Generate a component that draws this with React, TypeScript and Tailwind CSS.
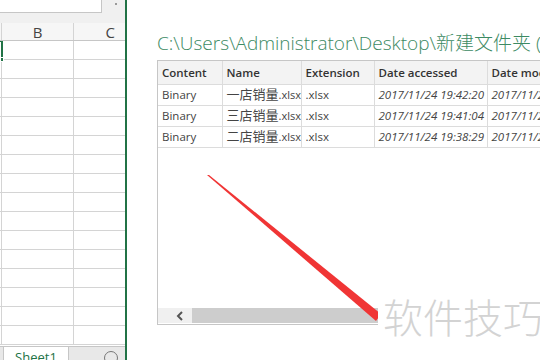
import React from 'react';

const rows = [
  { content: 'Binary', name: '一店销量.xlsx', ext: '.xlsx', accessed: '2017/11/24 19:42:20', modified: '2017/11/24 19:42:20' },
  { content: 'Binary', name: '三店销量.xlsx', ext: '.xlsx', accessed: '2017/11/24 19:41:04', modified: '2017/11/24 19:41:04' },
  { content: 'Binary', name: '二店销量.xlsx', ext: '.xlsx', accessed: '2017/11/24 19:38:29', modified: '2017/11/24 19:38:29' },
];

const font = { fontFamily: '"Open Sans", "Noto Sans CJK SC", sans-serif' };

const Sheet: React.FC = () => {
  const gridRows = Array.from({ length: 16 });
  return (
    <div className="relative flex h-full w-[127px] shrink-0 flex-col border-r-2 border-[#217346] bg-white">
      <div className="flex h-[23px] shrink-0 items-start bg-[#f0f0f0]">
        <div className="h-[13px] w-[102px] border-b border-r border-[#c6c6c6] bg-white" />
        <div className="ml-[13px] mt-[3px] h-[2px] w-[2px] bg-[#9a9a9a]" />
      </div>
      <div className="flex h-[18px] shrink-0 border-b border-[#c6c6c6] bg-[#f6f6f6] text-[15px] leading-[18px] text-[#444]" style={{ fontFamily: '"Open Sans", sans-serif' }}>
        <div className="w-[2px] border-r border-[#d4d4d4]" />
        <div className="w-[72px] border-r border-[#d4d4d4] text-center">B</div>
        <div className="flex-1 pr-[10px] text-right">C</div>
      </div>
      <div className="relative flex-1 overflow-hidden">
        {gridRows.map((_, i) => (
          <div key={i} className="flex h-[19px] border-b border-[#d4d4d4]">
            <div className="w-[2px] border-r border-[#d4d4d4]" />
            <div className="w-[72px] border-r border-[#d4d4d4]" />
            <div className="flex-1" />
          </div>
        ))}
        <div className="absolute left-[-2px] top-[-1px] h-[21px] w-[5px] border-2 border-[#217346]" />
        <div className="absolute left-0 top-[16px] h-[5px] w-[4px] border border-white bg-[#217346]" />
        <div className="absolute bottom-0 left-0 right-0 flex h-[14px] border-t border-[#c6c6c6] bg-[#e8e8e8]">
          <div className="ml-[3px] w-[66px] overflow-hidden border-x border-[#c6c6c6] bg-white pt-[3px] text-center text-[13px] leading-[14px] text-[#217346]" style={font}>
            Sheet1
          </div>
          <div className="ml-auto mr-[7px] mt-[4px] h-[14px] w-[14px] rounded-full border border-[#777]" />
        </div>
      </div>
    </div>
  );
};

const cell = 'whitespace-nowrap border-b border-r border-[#dcdcdc] px-[4px]';

const Preview: React.FC = () => (
  <div className="flex min-w-0 flex-1 flex-col overflow-hidden pl-[30px]" style={font}>
    <div className="mt-[29px] h-[31px] whitespace-nowrap text-[19px] font-light leading-[28px] text-[#3c8a63]">
      C:\Users\Administrator\Desktop\新建文件夹 (新建文件夹)
    </div>
    <div className="relative flex h-[265px] w-[440px] shrink-0 flex-col overflow-hidden border border-[#c6c6c6] bg-white">
      <table className="w-[442px] table-fixed border-collapse text-[11.5px] text-[#444]">
        <colgroup>
          <col className="w-[64px]" />
          <col className="w-[79px]" />
          <col className="w-[73px]" />
          <col className="w-[113px]" />
          <col className="w-[113px]" />
        </colgroup>
        <thead>
          <tr className="h-[23px] bg-[#f3f3f3]">
            {['Content', 'Name', 'Extension', 'Date accessed', 'Date modified'].map((h) => (
              <th key={h} className={`${cell} text-left font-semibold text-[#333]`}>
                {h}
              </th>
            ))}
          </tr>
        </thead>
        <tbody>
          {rows.map((r) => (
            <tr key={r.name} className="h-[21px]">
              <td className={cell}>{r.content}</td>
              <td className={`${cell} overflow-hidden`}>
                <span className="text-[13px]">{r.name.slice(0, 4)}</span>
                <span className="text-[11px]">{r.name.slice(4)}</span>
              </td>
              <td className={cell}>{r.ext}</td>
              <td className={`${cell} italic`}>{r.accessed}</td>
              <td className={`${cell} italic`}>{r.modified}</td>
            </tr>
          ))}
        </tbody>
      </table>
      <div className="mt-auto mb-[1px] flex h-[15px]">
        <div className="flex w-[34px] items-center justify-center bg-[#f0f0f0] pl-[10px]">
          <svg width="8" height="10" viewBox="0 0 8 10">
            <path d="M6 1 L2 5 L6 9" fill="none" stroke="#555" strokeWidth="2" />
          </svg>
        </div>
        <div className="flex-1 bg-[#cdcdcd]" />
      </div>
    </div>
  </div>
);

export default function App() {
  return (
    <div className="relative flex h-[360px] w-[540px] overflow-hidden bg-white">
      <Sheet />
      <Preview />
      <svg className="absolute left-0 top-0" width="540" height="360" viewBox="0 0 540 360">
        <polygon points="207,175 209,175 381,314 376,321" fill="#f03535" />
      </svg>
      <div
        className="absolute left-[378px] top-[292px] whitespace-nowrap bg-white pl-[5px] text-[40px] font-light leading-[48px] text-[#d3d3d3]"
        style={{ fontFamily: '"Noto Sans CJK SC", sans-serif' }}
      >
        软件技巧
      </div>
    </div>
  );
}
